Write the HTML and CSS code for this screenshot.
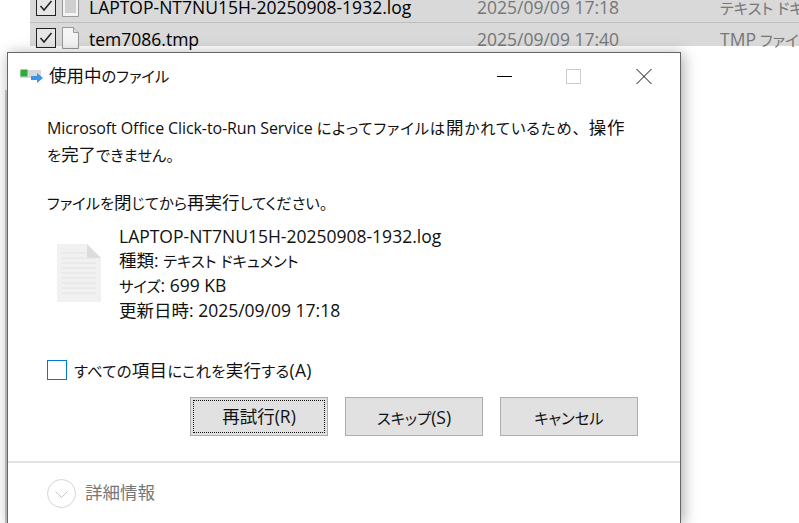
FILE: index.html
```html
<!DOCTYPE html>
<html lang="ja">
<head>
<meta charset="utf-8">
<title>使用中のファイル</title>
<link rel="stylesheet" href="styles.css">
</head>
<body>
<div class="explorer">
  <div class="row row-first">
    <span class="check"><svg width="16" height="16" viewBox="0 0 16 16"><path d="M2.500 8 6 12 13.500 3" fill="none" stroke="#222" stroke-width="1.500"/></svg></span>
    <svg class="fileicon" width="17" height="22" viewBox="0 0 17 22"><path d="M.5.5h16v21H.5z" fill="#f4f4f4" stroke="#999"/><path d="M3 3h11M3 5h11M3 7h11M3 9h11M3 11h11M3 13h11M3 15h11M3 17h11" stroke="#aaa"/></svg>
    <span class="name lat">LAPTOP-NT7NU15H-20250908-1932.log</span>
    <span class="date lat">2025/09/09 17:18</span>
    <span class="type">テキスト ドキュメント</span>
  </div>
  <div class="row">
    <span class="check"><svg width="16" height="16" viewBox="0 0 16 16"><path d="M2.500 8 6 12 13.500 3" fill="none" stroke="#222" stroke-width="1.500"/></svg></span>
    <svg class="fileicon" width="17" height="22" viewBox="0 0 17 22"><path d="M.5.5h11l5 5v16H.5z" fill="#f4f4f4" stroke="#999"/><path d="M11.500.5v5h5" fill="#ddd" stroke="#999"/></svg>
    <span class="name lat">tem7086.tmp</span>
    <span class="date lat">2025/09/09 17:40</span>
    <span class="type"><span class="lat">TMP</span> ファイル</span>
  </div>
</div>
<div class="edge"></div>
<section class="dialog">
  <header class="titlebar">
    <svg class="appicon" width="24" height="16" viewBox="0 0 24 16"><rect x="0" y="1" width="21" height="8" fill="#d8d8d8"/><rect x="0.500" y="0.500" width="7" height="7" fill="#2eaa3a"/><path d="M11 7h6V4l6 5-6 5v-3h-6z" fill="#3a96e4"/></svg>
    <h1 class="title"><span class="k">使用中</span>のファイル</h1>
    <div class="controls">
      <svg class="ctl" width="46" height="32" viewBox="0 0 46 32"><path d="M16 16.500h15" stroke="#000"/></svg>
      <svg class="ctl" width="46" height="32" viewBox="0 0 46 32"><rect x="15.500" y="9.500" width="14" height="14" fill="none" stroke="#ccc"/></svg>
      <svg class="ctl" width="46" height="32" viewBox="0 0 46 32"><path d="M15.500 9 30.500 24M30.500 9 15.500 24" stroke="#111" fill="none"/></svg>
    </div>
  </header>
  <div class="body">
    <p class="message"><span class="en">Microsoft Office Click-to-Run Service</span> <span class="loose">によってファイルは<span class="k">開</span>かれているため<span class="full">、</span><span class="k">操作</span></span>を<span class="k">完了</span>できません。</p>
    <p class="hint">ファイルを<span class="k">閉</span>じてから<span class="k">再実行</span>してください。</p>
    <div class="fileinfo">
      <svg class="bigicon" width="44" height="58" viewBox="0 0 44 58"><path d="M0 0h30l14 14v44H0z" fill="#f1f1f1"/><path d="M30 0l14 14H30z" fill="#dcdcdc"/><path d="M5 9h26M5 14h34M5 19h34M5 24h34M5 29h34M5 34h34M5 39h34M5 44h34M5 49h34" stroke="#e2e2e2"/></svg>
      <div class="meta">
        <div class="line lat">LAPTOP-NT7NU15H-20250908-1932.log</div>
        <div class="line"><span class="k">種類</span><span class="lat">: </span>テキスト ドキュメント</div>
        <div class="line">サイズ<span class="lat">: 699 KB</span></div>
        <div class="line"><span class="k">更新日時</span><span class="lat">: 2025/09/09 17:18</span></div>
      </div>
    </div>
    <label class="applyall"><span class="box"></span><span class="applytext">すべての<span class="k">項目</span>にこれを<span class="k">実行</span>する<span class="lat">(A)</span></span></label>
    <div class="buttons">
      <button class="btn btn-focus"><span class="btn-in"><span><span class="k">再試行</span><span class="lat">(R)</span></span></span></button>
      <button class="btn"><span class="btn-in"><span>スキップ<span class="lat">(S)</span></span></span></button>
      <button class="btn"><span class="btn-in">キャンセル</span></button>
    </div>
  </div>
  <footer class="footer">
    <svg class="chev" width="29" height="29" viewBox="0 0 29 29"><circle cx="14.500" cy="14.500" r="14" fill="#fff" stroke="#d4d4d4"/><path d="M8.500 12.500 14.500 18.500 20.500 12.500" fill="none" stroke="#c4c4c4"/></svg>
    <span class="more k">詳細情報</span>
  </footer>
</section>
</body>
</html>
```
FILE: styles.css
```css
* { box-sizing: border-box; }
html, body { margin: 0; height: 100%; overflow: hidden; background: #fff; }
body { width: 799px; height: 523px; position: relative; font-family: "Open Sans", "Noto Sans CJK JP", sans-serif; font-size: 15.3px; color: #111; font-feature-settings: "palt"; }
.lat, .k { font-size: 17.5px; line-height: 1; }
.en { font-size: 16px; letter-spacing: -.1px; line-height: 1; }
.loose { letter-spacing: .9px; line-height: 1; }
.full { font-feature-settings: normal; }
.explorer { margin-left: 30px; height: 55px; background: #d9d9d9; color: #000; }
.row { display: flex; align-items: center; height: 32px; padding-left: 6px; }
.row-first { margin-top: -9px; border-bottom: 1px solid #bdbdbd; }
.check { width: 20px; height: 20px; border: 1px solid #222; display: flex; align-items: center; justify-content: center; flex: none; background: #e6e6e6; margin-bottom: 2px; }
.fileicon { flex: none; margin: 0 0 2px 6px; }
.name { width: 388px; margin: 2px 0 0 10px; flex: none; white-space: nowrap; }
.date { width: 243px; margin-top: 2px; color: #777; flex: none; }
.type { color: #777; white-space: nowrap; }
.edge { position: absolute; left: 0; top: 90px; bottom: 0; width: 7px; background: linear-gradient(to right, #fff 0 5px, #ccc 5px); }
.dialog { position: absolute; left: 7px; top: 52px; width: 674px; height: 471px; background: #fff; border: 1px solid #666; border-bottom: 0; box-shadow: 2px 2px 14px rgba(0,0,0,.35); display: flex; flex-direction: column; }
.titlebar { display: flex; align-items: center; height: 45px; flex: none; padding-left: 12px; }
.appicon { flex: none; margin: 3px 5px 0 0; }
.title { margin: 0 0 2px; font-size: 15.3px; font-weight: 400; flex: 1; }
.controls { display: flex; margin-right: 13px; gap: 24px; }
.ctl { display: block; }
.body { flex: 1; padding: 17px 39px 0; display: flex; flex-direction: column; }
.message { margin: 0; line-height: 27px; width: 590px; }
.hint { margin: 21px 0 0; line-height: 27px; }
.fileinfo { display: flex; margin-top: 7px; line-height: 25px; }
.bigicon { flex: none; margin: 20px 0 0 10px; }
.meta { margin-left: 18px; }
.line { height: 25px; line-height: 25px; white-space: nowrap; }
.applyall { display: flex; align-items: center; gap: 7px; margin-top: 35px; }
.applytext { letter-spacing: .3px; }
.box { width: 20px; height: 20px; border: 1px solid #0078d7; flex: none; }
.buttons { display: flex; gap: 17px; margin: 16px 0 0 143px; }
.btn { width: 138px; height: 39px; background: #e1e1e1; border: 1px solid #adadad; padding: 2px; font: inherit; font-feature-settings: "palt"; color: #111; }
.btn-in { display: flex; height: 100%; align-items: center; justify-content: center; border: 1px dotted transparent; }
.btn-focus .btn-in { border-color: #111; }
.footer { flex: none; height: 62px; border-top: 2px solid #e3e3e3; display: flex; align-items: center; padding-left: 39px; gap: 9px; }
.chev { flex: none; }
.more { color: #777; }
```
